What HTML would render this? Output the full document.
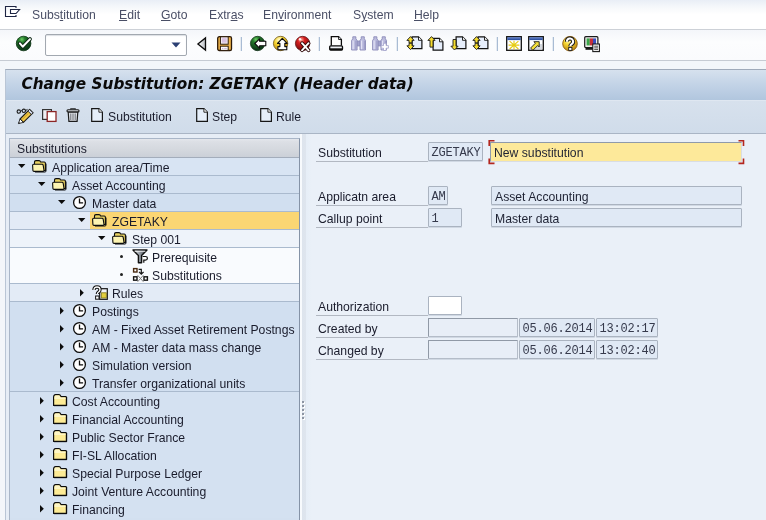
<!DOCTYPE html>
<html><head><meta charset="utf-8"><title>Change Substitution</title>
<style>
*{box-sizing:border-box;margin:0;padding:0}
html,body{width:766px;height:520px;overflow:hidden}
body{position:relative;will-change:transform;background:#eef2f8;font-family:"Liberation Sans","DejaVu Sans",sans-serif;font-size:12.2px;color:#1a1c2c}
.a{position:absolute}
.t{position:absolute;white-space:nowrap;line-height:14px;height:14px}
svg{position:absolute;overflow:visible}
#menubar{left:0;top:0;width:766px;height:29px;background:linear-gradient(#e9eef6,#f6f8fb 25%,#ffffff 50%,#ffffff)}
#menuline{left:0;top:29px;width:766px;height:1px;background:#cdd1d7}
#toolbar{left:0;top:30px;width:766px;height:30px;background:linear-gradient(#f4f6fa,#fcfdfe 40%,#fafbfd)}
#toolline{left:0;top:60px;width:766px;height:1px;background:#c6cbd3}
#gap{left:0;top:61px;width:766px;height:459px;background:#f3f6fa}
.menu{top:8px;color:#4a4f66}
#titlepanel{left:5px;top:69px;width:761px;height:451px;background:#e4ebf4;border-left:1px solid #b9c5d5;border-top:1px solid #9faaba}
#titlebar{left:6px;top:70px;width:760px;height:30px;background:linear-gradient(#d6e1ee,#c4d4e7 45%,#b1c6de)}
#titleline{left:6px;top:100px;width:760px;height:1px;background:#dfe7f1}
#title{left:21.500px;top:73px;font-family:"DejaVu Sans","Liberation Sans",sans-serif;font-size:15.300px;line-height:22px;height:22px;font-weight:bold;font-style:italic;color:#0a0a0a}
#apptb{left:6px;top:101px;width:760px;height:32px;background:linear-gradient(#d7e1ed,#d0dcea)}
#apptbline{left:6px;top:133px;width:760px;height:1px;background:#a9b5c5}
#work{left:6px;top:134px;width:760px;height:386px;background:#e6edf6}
#right{left:306px;top:134px;width:460px;height:386px;background:linear-gradient(90deg,#e6eef7,#eaf0f8 6px,#eaf0f8)}
#split{left:300px;top:134px;width:6px;height:386px;background:linear-gradient(90deg,#f7fafd 0,#f7fafd 2px,#dde4ed 2px,#dee5ee 6px)}
#tree{left:9px;top:138px;width:291px;height:382px;border:1px solid #a9b6c8;border-right-color:#8593a7;border-bottom:0;background:#d3e0f0}
#treehdr{left:10px;top:139px;width:289px;height:19px;background:linear-gradient(#e4e7ec,#dcdfe5 15%,#d4d8de 60%,#cbd0d8);border-bottom:1px solid #a3adbb}
.row{position:absolute;left:10px;width:289px;height:18px}
.sep{position:absolute;left:10px;width:289px;height:1px;background:#aabace}
.lbl{color:#1a1c2c}
.ul{position:absolute;height:1px;background:#b2b8c2;left:316px;width:112px}
.fld{position:absolute;height:19px;border:1px solid #aab3c0;border-radius:1px;background:#e0e9f5;box-shadow:0 1px 0 rgba(160,172,188,0.350)}
.ft{position:absolute;white-space:nowrap;line-height:14px;height:14px;color:#1e2233}
.mono{font-family:"Liberation Mono","DejaVu Sans Mono",monospace;font-size:12px;letter-spacing:-0.200px;color:#363a4c}
</style></head><body>
<svg width="0" height="0" style="left:0;top:0"><defs>
<radialGradient id="gG" cx="40%" cy="25%" r="75%"><stop offset="0" stop-color="#7fd873"/><stop offset="0.3" stop-color="#2a8a30"/><stop offset="1" stop-color="#0c3d18"/></radialGradient>
<radialGradient id="gG2" cx="38%" cy="22%" r="70%"><stop offset="0" stop-color="#6fd066"/><stop offset="0.3" stop-color="#247a2b"/><stop offset="1" stop-color="#0c3a17"/></radialGradient>
<radialGradient id="gY" cx="40%" cy="25%" r="80%"><stop offset="0" stop-color="#fffbd0"/><stop offset="0.4" stop-color="#f7d530"/><stop offset="1" stop-color="#b07a10"/></radialGradient>
<radialGradient id="gR" cx="40%" cy="25%" r="80%"><stop offset="0" stop-color="#ffb0a0"/><stop offset="0.3" stop-color="#d62020"/><stop offset="1" stop-color="#6a0808"/></radialGradient>
<linearGradient id="gTri" x1="0" x2="1"><stop offset="0" stop-color="#fff"/><stop offset="1" stop-color="#b9bec4"/></linearGradient>
<linearGradient id="gFun" x1="0" x2="1"><stop offset="0" stop-color="#fafafa"/><stop offset="0.4" stop-color="#a4aab2"/><stop offset="1" stop-color="#3a3f46"/></linearGradient>
</defs></svg>
<div class="a" id="menubar"></div><div class="a" id="menuline"></div><div class="a" id="toolbar"></div><div class="a" id="toolline"></div><div class="a" id="gap"></div>
<span class="t menu" style="left:32px">Subs<u>t</u>itution</span>
<span class="t menu" style="left:119px"><u>E</u>dit</span>
<span class="t menu" style="left:161px"><u>G</u>oto</span>
<span class="t menu" style="left:209px">Extr<u>a</u>s</span>
<span class="t menu" style="left:263px">En<u>v</u>ironment</span>
<span class="t menu" style="left:353px">S<u>y</u>stem</span>
<span class="t menu" style="left:414px"><u>H</u>elp</span>
<div class="a" style="left:45px;top:34px;width:142px;height:22px;border:1px solid #a2a8b0;border-radius:2px;background:#fff;box-shadow:inset 0 1px 1px #dcdfe4"></div>
<svg style="left:171px;top:42px" width="10" height="6"><path d="M0.5 0.5h9l-4.5 5z" fill="#2b3f73"/></svg>
<svg style="left:4px;top:5px" width="18" height="13" viewBox="0 0 18 13"><path d="M12 3V1.500H1.500V11.500H12V10" fill="none" stroke="#1d2442" stroke-width="1.100"/><path d="M6.500 4.500H15.600L12 8.500H6.500Z" fill="#fff" stroke="#1d2442" stroke-width="1.100"/></svg>
<svg style="left:15px;top:35px" width="19" height="17" viewBox="0 0 19 17"><circle cx="8.600" cy="8.500" r="7.300" fill="url(#gG2)" stroke="#0b3313" stroke-width="0.800"/><path d="M4.900 8.400l2.800 3.300 7.300-7.600" fill="none" stroke="#0c2612" stroke-width="3.800" stroke-linecap="round" stroke-linejoin="round"/><path d="M4.900 8.400l2.800 3.300 7.300-7.600" fill="none" stroke="#fff" stroke-width="2" stroke-linecap="round" stroke-linejoin="round"/></svg>
<svg style="left:196px;top:36px" width="12" height="16" viewBox="0 0 12 16"><path d="M9.500 1.900V14.100L1.900 8Z" fill="url(#gTri)" stroke="#0c0c0c" stroke-width="1.300" stroke-linejoin="miter"/></svg>
<svg style="left:217px;top:36px" width="16" height="16" viewBox="0 0 16 16"><rect x="0.700" y="0.700" width="13.800" height="13.800" rx="1.600" fill="#f1b64c" stroke="#2c1a08" stroke-width="1.300"/><rect x="3.400" y="0.800" width="7.800" height="7.400" fill="#f6f0f8" stroke="#2c1a08" stroke-width="1"/><rect x="4.900" y="2.100" width="4.800" height="4.600" fill="#d9c2e2"/><rect x="3.400" y="10.200" width="7.800" height="4.200" fill="#fff" stroke="#2c1a08" stroke-width="1"/><path d="M5 12.400h1.400M7.200 12.400h2.600" stroke="#c9b0d8" stroke-width="1"/></svg>
<svg style="left:250px;top:36px" width="18" height="17" viewBox="0 0 18 17"><circle cx="7.600" cy="7.500" r="7.200" fill="url(#gG2)" stroke="#0a2a10" stroke-width="0.700"/><path d="M4.800 7.500L9.600 2.800V5.300H15.800V9.700H9.600V12.200Z" fill="#fff" stroke="#0a0a0a" stroke-width="1.100" stroke-linejoin="round"/></svg>
<svg style="left:273px;top:36px" width="18" height="17" viewBox="0 0 18 17"><circle cx="7.600" cy="7.500" r="7.200" fill="url(#gY)" stroke="#5a4208" stroke-width="0.700"/><path d="M9.300 2.300L14.200 7.400H11.800V10.600H13.800V13.800H4.900V10.600H6.900V7.400H4.500Z" fill="#fff" stroke="#0a0a0a" stroke-width="1.100" stroke-linejoin="round"/></svg>
<svg style="left:295px;top:36px" width="18" height="17" viewBox="0 0 18 17"><circle cx="7.600" cy="7.500" r="7.200" fill="url(#gR)" stroke="#4a0808" stroke-width="0.700"/><path d="M7 7.200L13.600 14.300M13.600 7.200L7 14.300" stroke="#2a0606" stroke-width="3.600" stroke-linecap="round"/><path d="M7 7.200L13.600 14.300M13.600 7.200L7 14.300" stroke="#fff" stroke-width="1.900" stroke-linecap="round"/><circle cx="5" cy="3.300" r="1.200" fill="#fff" opacity="0.900"/></svg>
<svg style="left:329px;top:36px" width="15" height="15" viewBox="0 0 15 15"><path d="M2.300 9.700V0.700H9.600L12.400 3.500V9.700" fill="#fff" stroke="#0c0c0c" stroke-width="1.300"/><path d="M9.600 0.700V3.500H12.400" fill="#e4e8ee" stroke="#0c0c0c" stroke-width="0.900"/><rect x="0.700" y="9.800" width="12.800" height="4.300" rx="1" fill="#eef1f6" stroke="#0c0c0c" stroke-width="1.300"/><path d="M0.700 13.200H13.500" stroke="#0c0c0c" stroke-width="1.800"/></svg>
<svg style="left:406px;top:36px" width="17" height="15" viewBox="0 0 17 15"><path d="M6.1 0.8999999999999999H12.5L15.9 4.3V12.700000000000001H6.1Z" fill="#e6eefb" stroke="#111" stroke-width="1.200"/><path d="M12.5 0.8999999999999999V4.3H15.9" fill="#fff" stroke="#111" stroke-width="0.900"/><path d="M4.5 0.6L8.1 4.3999999999999995H6.0V6.8999999999999995H3.0V4.3999999999999995H0.8999999999999999Z" fill="#f5dc2e" stroke="#1a1a1a" stroke-width="0.900" stroke-linejoin="round"/><path d="M4.5 13.6L8.1 9.8H6.0V7.3H3.0V9.8H0.8999999999999999Z" fill="#f5dc2e" stroke="#1a1a1a" stroke-width="0.900" stroke-linejoin="round"/></svg>
<svg style="left:427px;top:36px" width="17" height="15" viewBox="0 0 17 15"><path d="M6.1 2.4H12.5L15.9 5.8V14.200000000000001H6.1Z" fill="#e6eefb" stroke="#111" stroke-width="1.200"/><path d="M12.5 2.4V5.8H15.9" fill="#fff" stroke="#111" stroke-width="0.900"/><path d="M4.5 0.6L8.1 4.3999999999999995H6.0V11.1H3.0V4.3999999999999995H0.8999999999999999Z" fill="#f5dc2e" stroke="#1a1a1a" stroke-width="0.900" stroke-linejoin="round"/></svg>
<svg style="left:450px;top:36px" width="17" height="15" viewBox="0 0 17 15"><path d="M6.1 0.8999999999999999H12.5L15.9 4.3V12.700000000000001H6.1Z" fill="#e6eefb" stroke="#111" stroke-width="1.200"/><path d="M12.5 0.8999999999999999V4.3H15.9" fill="#fff" stroke="#111" stroke-width="0.900"/><path d="M4.5 14L8.1 10.2H6.0V3.5H3.0V10.2H0.8999999999999999Z" fill="#f5dc2e" stroke="#1a1a1a" stroke-width="0.900" stroke-linejoin="round"/></svg>
<svg style="left:472px;top:36px" width="17" height="15" viewBox="0 0 17 15"><path d="M6.1 0.8999999999999999H12.5L15.9 4.3V12.700000000000001H6.1Z" fill="#e6eefb" stroke="#111" stroke-width="1.200"/><path d="M12.5 0.8999999999999999V4.3H15.9" fill="#fff" stroke="#111" stroke-width="0.900"/><path d="M4.5 0.6L8.1 4.3999999999999995H6.0V6.8999999999999995H3.0V4.3999999999999995H0.8999999999999999Z" fill="#f5dc2e" stroke="#1a1a1a" stroke-width="0.900" stroke-linejoin="round"/><path d="M4.5 13.6L8.1 9.8H6.0V7.3H3.0V9.8H0.8999999999999999Z" fill="#f5dc2e" stroke="#1a1a1a" stroke-width="0.900" stroke-linejoin="round"/></svg>
<svg style="left:506px;top:36px" width="16" height="15" viewBox="0 0 16 15"><rect x="0.700" y="0.700" width="14.600" height="13.600" fill="#fff" stroke="#111" stroke-width="1.300"/><rect x="1.300" y="1.300" width="13.400" height="2.800" fill="#2f52a4"/><path d="M2 2h12" stroke="#7f9ad6" stroke-width="0.700"/><path d="M8 4.800v8.600M2.600 9.100h10.800M3.600 5.200l8.800 7.800M12.400 5.200l-8.800 7.800" stroke="#e6cc12" stroke-width="1.100"/></svg>
<svg style="left:528px;top:36px" width="16" height="15" viewBox="0 0 16 15"><rect x="0.700" y="0.700" width="14.600" height="13.600" fill="#fff" stroke="#111" stroke-width="1.300"/><rect x="1.300" y="1.300" width="13.400" height="2.800" fill="#2f52a4"/><path d="M2 2h12" stroke="#7f9ad6" stroke-width="0.700"/><rect x="7.500" y="8" width="6.500" height="5.500" fill="#d4d8de"/><path d="M2.600 12L7.400 7.200L5.900 5.700H11.200V11L9.700 9.500L4.900 14.300Z" fill="#f3df3a" stroke="#1a1a1a" stroke-width="0.900" stroke-linejoin="round"/></svg>
<svg style="left:562px;top:36px" width="17" height="16" viewBox="0 0 17 16"><circle cx="8" cy="7.700" r="7.300" fill="url(#gY)" stroke="#8a5a0c" stroke-width="0.900"/><path d="M4.900 5.700a3.100 3.100 0 1 1 4.700 2.500q-1.300 0.800-1.300 2.100" fill="none" stroke="#1a1a1a" stroke-width="4"/><path d="M4.900 5.700a3.100 3.100 0 1 1 4.700 2.500q-1.300 0.800-1.300 2.100" fill="none" stroke="#fff" stroke-width="2"/><rect x="6.700" y="11.400" width="3.200" height="3" fill="#fff" stroke="#1a1a1a" stroke-width="0.900"/></svg>
<svg style="left:584px;top:36px" width="17" height="17" viewBox="0 0 17 17"><rect x="0.700" y="0.700" width="13.200" height="10.800" rx="1" fill="#eeeeee" stroke="#1a1a1a" stroke-width="1.200"/><rect x="2.600" y="2.400" width="3.200" height="7" fill="#3aa64a"/><rect x="5.800" y="2.400" width="3.200" height="7" fill="#c62f3a"/><rect x="9" y="2.400" width="3" height="7" fill="#3a4cc0"/><rect x="1.500" y="12" width="8" height="1.800" fill="#1a1a1a"/><rect x="8.800" y="8" width="6.600" height="7.600" fill="#fff" stroke="#1a1a1a" stroke-width="1.100"/><path d="M10.200 10.200h3.800M10.200 11.900h3.800M10.200 13.600h3.800" stroke="#1a1a1a" stroke-width="0.800"/></svg>
<svg style="left:351px;top:36px" width="17" height="15" viewBox="0 0 17 15"><rect x="5.800" y="5" width="3.600" height="5" fill="#a2a2cc" stroke="#8a8ab8" stroke-width="0.700"/><path d="M1.7999999999999998 0.800H4.8999999999999995V2.800L6.1 4.400V14H0.6V4.400L1.7999999999999998 2.800Z" fill="#bcbcde" stroke="#8a8ab8" stroke-width="0.900" stroke-linejoin="round"/><path d="M2.1 4.600V13.200" stroke="#e2e2f5" stroke-width="1.200"/><path d="M4.8999999999999995 4.600V13.200" stroke="#9a9ac6" stroke-width="1.100"/><path d="M10.2 0.800H13.3V2.800L14.5 4.400V14H9V4.400L10.2 2.800Z" fill="#bcbcde" stroke="#8a8ab8" stroke-width="0.900" stroke-linejoin="round"/><path d="M10.5 4.600V13.200" stroke="#e2e2f5" stroke-width="1.200"/><path d="M13.3 4.600V13.200" stroke="#9a9ac6" stroke-width="1.100"/></svg>
<svg style="left:372px;top:36px" width="17" height="15" viewBox="0 0 17 15"><rect x="5.800" y="5" width="3.600" height="5" fill="#a2a2cc" stroke="#8a8ab8" stroke-width="0.700"/><path d="M1.7999999999999998 0.800H4.8999999999999995V2.800L6.1 4.400V14H0.6V4.400L1.7999999999999998 2.800Z" fill="#bcbcde" stroke="#8a8ab8" stroke-width="0.900" stroke-linejoin="round"/><path d="M2.1 4.600V13.200" stroke="#e2e2f5" stroke-width="1.200"/><path d="M4.8999999999999995 4.600V13.200" stroke="#9a9ac6" stroke-width="1.100"/><path d="M10.2 0.800H13.3V2.800L14.5 4.400V14H9V4.400L10.2 2.800Z" fill="#bcbcde" stroke="#8a8ab8" stroke-width="0.900" stroke-linejoin="round"/><path d="M10.5 4.600V13.200" stroke="#e2e2f5" stroke-width="1.200"/><path d="M13.3 4.600V13.200" stroke="#9a9ac6" stroke-width="1.100"/><path d="M9.200 9.600h2.300V7.300h2.600v2.300h2.300v2.600h-2.300v2.300h-2.600v-2.300H9.200Z" fill="#fff" stroke="#a2a2cc" stroke-width="0.800"/></svg>
<div class="a" style="left:241px;top:37px;width:1px;height:14px;background:#a9bcd4;box-shadow:-1px 0 0 rgba(169,188,212,0.25)"></div>
<div class="a" style="left:319px;top:37px;width:1px;height:14px;background:#a9bcd4;box-shadow:-1px 0 0 rgba(169,188,212,0.25)"></div>
<div class="a" style="left:397px;top:37px;width:1px;height:14px;background:#a9bcd4;box-shadow:-1px 0 0 rgba(169,188,212,0.25)"></div>
<div class="a" style="left:497px;top:37px;width:1px;height:14px;background:#a9bcd4;box-shadow:-1px 0 0 rgba(169,188,212,0.25)"></div>
<div class="a" style="left:553px;top:37px;width:1px;height:14px;background:#a9bcd4;box-shadow:-1px 0 0 rgba(169,188,212,0.25)"></div>
<div class="a" id="titlepanel"></div><div class="a" id="titlebar"></div><div class="a" id="titleline"></div>
<div class="t" id="title">Change Substitution: ZGETAKY (Header data)</div>
<div class="a" id="apptb"></div><div class="a" id="apptbline"></div>
<span class="t" style="left:108px;top:110px;color:#1a1c2c">Substitution</span>
<span class="t" style="left:212px;top:110px;color:#1a1c2c">Step</span>
<span class="t" style="left:276px;top:110px;color:#1a1c2c">Rule</span>
<svg style="left:91px;top:108px" width="14" height="14" viewBox="0 0 14 14"><path d="M0.700 0.700H7.900L11.400 4.200V13.300H0.700Z" fill="#e6effa" stroke="#161616" stroke-width="1.200"/><path d="M7.900 0.700V4.200H11.400" fill="#fff" stroke="#161616" stroke-width="0.900"/></svg>
<svg style="left:196px;top:108px" width="14" height="14" viewBox="0 0 14 14"><path d="M0.700 0.700H7.900L11.400 4.200V13.300H0.700Z" fill="#e6effa" stroke="#161616" stroke-width="1.200"/><path d="M7.900 0.700V4.200H11.400" fill="#fff" stroke="#161616" stroke-width="0.900"/></svg>
<svg style="left:260px;top:108px" width="14" height="14" viewBox="0 0 14 14"><path d="M0.700 0.700H7.900L11.400 4.200V13.300H0.700Z" fill="#e6effa" stroke="#161616" stroke-width="1.200"/><path d="M7.900 0.700V4.200H11.400" fill="#fff" stroke="#161616" stroke-width="0.900"/></svg>
<svg style="left:16px;top:108px" width="19" height="16" viewBox="0 0 19 16"><circle cx="2.800" cy="3.600" r="1.700" fill="none" stroke="#1c1c1c" stroke-width="1.100"/><circle cx="7.800" cy="2.800" r="1.700" fill="none" stroke="#1c1c1c" stroke-width="1.100"/><path d="M4.500 3.300q0.900-1.200 1.700-0.300M9.500 2.600l2-1.200" fill="none" stroke="#1c1c1c" stroke-width="1"/><path d="M13.600 1.400L17 4.800L7.400 14.400L4 11Z" fill="#f3c844" stroke="#1c1c1c" stroke-width="1.100" stroke-linejoin="round"/><path d="M13.600 1.400L17 4.800L15.300 6.500L11.900 3.100Z" fill="#d5dbee" stroke="#1c1c1c" stroke-width="0.900"/><path d="M4 11L7.400 14.400L2.400 15.600Z" fill="#fff" stroke="#1c1c1c" stroke-width="0.900" stroke-linejoin="round"/><path d="M2.400 15.600l1.700-0.400-1.200-1.200z" fill="#1c1c1c"/><path d="M12.200 5.500L6.200 11.500" stroke="#b8901c" stroke-width="0.800"/></svg>
<svg style="left:42px;top:109px" width="15" height="13" viewBox="0 0 15 13"><rect x="0.600" y="0.600" width="8.800" height="9.800" fill="#eef0f4" stroke="#333" stroke-width="1.200"/><rect x="5.200" y="2.600" width="8.800" height="9.800" fill="#fff" stroke="#8c2525" stroke-width="1.300"/></svg>
<svg style="left:66px;top:108px" width="14" height="14" viewBox="0 0 14 14"><path d="M4.800 1.800V0.700h4.400v1.100" fill="none" stroke="#222" stroke-width="1.100"/><rect x="1" y="1.800" width="12" height="2.200" rx="1" fill="#d4d8de" stroke="#1c1c1c" stroke-width="1.100"/><path d="M2.200 4.200h9.600l-0.700 9.200H2.900Z" fill="#e0e3e8" stroke="#1c1c1c" stroke-width="1.200"/><path d="M4.800 5.500v6.500M7 5.500v6.500M9.200 5.500v6.500" stroke="#5c6068" stroke-width="0.900"/></svg>
<div class="a" id="work"></div><div class="a" id="split"></div><div class="a" id="right"></div>
<div class="a" style="left:302px;top:401px;width:2px;height:2px;background:#8d95a3;box-shadow:1px 1px 0 #fff"></div><div class="a" style="left:302px;top:405px;width:2px;height:2px;background:#8d95a3;box-shadow:1px 1px 0 #fff"></div><div class="a" style="left:302px;top:409px;width:2px;height:2px;background:#8d95a3;box-shadow:1px 1px 0 #fff"></div><div class="a" style="left:302px;top:413px;width:2px;height:2px;background:#8d95a3;box-shadow:1px 1px 0 #fff"></div><div class="a" style="left:302px;top:417px;width:2px;height:2px;background:#8d95a3;box-shadow:1px 1px 0 #fff"></div>
<div class="a" id="tree"></div><div class="a" id="treehdr"></div>
<span class="t" style="left:17px;top:142px">Substitutions</span>
<div class="row" style="top:158px;background:#d8e4f3"></div>
<svg style="left:17.5px;top:164.2px" width="8" height="5"><path d="M0 0h7.400l-3.700 4z" fill="#0c0c0c"/></svg>
<svg style="left:32px;top:160px" width="17" height="16" viewBox="0 0 17 16"><path d="M2.500 2.200Q2.500 0.600 4 0.600H7Q8.300 0.600 8.600 2H12.300Q13.400 2 13.400 3.200V10.500H2.500Z" fill="#e9d262" stroke="#0c0c0c" stroke-width="1.100"/><path d="M0.600 5.300Q0.600 4.300 1.600 4.300H10Q11 4.300 11.200 5.300L12 10.300Q12 11.400 11 11.400H2Q1 11.400 0.900 10.400Z" fill="#fdf4b2" stroke="#0c0c0c" stroke-width="1.100"/><path d="M14 3.600V11Q14 12 13 12H3" fill="none" stroke="#0c0c0c" stroke-width="1"/></svg>
<span class="t" style="left:52px;top:161px">Application area/Time</span>
<div class="row" style="top:176px;background:#d4e1f1"></div>
<div class="sep" style="top:175px"></div>
<svg style="left:37.5px;top:182.2px" width="8" height="5"><path d="M0 0h7.400l-3.700 4z" fill="#0c0c0c"/></svg>
<svg style="left:52px;top:178px" width="17" height="16" viewBox="0 0 17 16"><path d="M2.500 2.200Q2.500 0.600 4 0.600H7Q8.300 0.600 8.600 2H12.300Q13.400 2 13.400 3.200V10.500H2.500Z" fill="#e9d262" stroke="#0c0c0c" stroke-width="1.100"/><path d="M0.600 5.300Q0.600 4.300 1.600 4.300H10Q11 4.300 11.200 5.300L12 10.300Q12 11.400 11 11.400H2Q1 11.400 0.900 10.400Z" fill="#fdf4b2" stroke="#0c0c0c" stroke-width="1.100"/><path d="M14 3.600V11Q14 12 13 12H3" fill="none" stroke="#0c0c0c" stroke-width="1"/></svg>
<span class="t" style="left:72px;top:179px">Asset Accounting</span>
<div class="row" style="top:194px;background:#d1dff0"></div>
<div class="sep" style="top:193px"></div>
<svg style="left:57.5px;top:200.2px" width="8" height="5"><path d="M0 0h7.400l-3.700 4z" fill="#0c0c0c"/></svg>
<svg style="left:72.8px;top:195.9px" width="17" height="16" viewBox="0 0 17 16"><circle cx="6.500" cy="6.500" r="5.900" fill="#fff" stroke="#0c0c0c" stroke-width="1.300"/><path d="M6.500 2.600v4.300h3.600" fill="none" stroke="#0c0c0c" stroke-width="1.300"/></svg>
<span class="t" style="left:92px;top:197px">Master data</span>
<div class="row" style="top:212px;background:#e3ebf6"></div>
<div class="sep" style="top:211px"></div>
<div class="a" style="left:90px;top:212px;width:209px;height:17px;background:#fbd673"></div>
<svg style="left:77.5px;top:218.2px" width="8" height="5"><path d="M0 0h7.400l-3.700 4z" fill="#0c0c0c"/></svg>
<svg style="left:92px;top:214px" width="17" height="16" viewBox="0 0 17 16"><path d="M2.500 2.200Q2.500 0.600 4 0.600H7Q8.300 0.600 8.600 2H12.300Q13.400 2 13.400 3.200V10.500H2.500Z" fill="#e9d262" stroke="#0c0c0c" stroke-width="1.100"/><path d="M0.600 5.300Q0.600 4.300 1.600 4.300H10Q11 4.300 11.200 5.300L12 10.300Q12 11.400 11 11.400H2Q1 11.400 0.900 10.400Z" fill="#fdf4b2" stroke="#0c0c0c" stroke-width="1.100"/><path d="M14 3.600V11Q14 12 13 12H3" fill="none" stroke="#0c0c0c" stroke-width="1"/></svg>
<span class="t" style="left:112px;top:215px">ZGETAKY</span>
<div class="row" style="top:230px;background:#eef3fa"></div>
<div class="sep" style="top:229px"></div>
<svg style="left:97.5px;top:236.2px" width="8" height="5"><path d="M0 0h7.400l-3.700 4z" fill="#0c0c0c"/></svg>
<svg style="left:112px;top:232px" width="17" height="16" viewBox="0 0 17 16"><path d="M2.500 2.200Q2.500 0.600 4 0.600H7Q8.300 0.600 8.600 2H12.300Q13.400 2 13.400 3.200V10.500H2.500Z" fill="#e9d262" stroke="#0c0c0c" stroke-width="1.100"/><path d="M0.600 5.300Q0.600 4.300 1.600 4.300H10Q11 4.300 11.200 5.300L12 10.300Q12 11.400 11 11.400H2Q1 11.400 0.900 10.400Z" fill="#fdf4b2" stroke="#0c0c0c" stroke-width="1.100"/><path d="M14 3.600V11Q14 12 13 12H3" fill="none" stroke="#0c0c0c" stroke-width="1"/></svg>
<span class="t" style="left:132px;top:233px">Step 001</span>
<div class="row" style="top:248px;background:#f9fbfe"></div>
<div class="sep" style="top:247px"></div>
<div class="a" style="left:120px;top:255px;width:3px;height:3px;border-radius:1.500px;background:#222"></div>
<svg style="left:132px;top:249px" width="17" height="16" viewBox="0 0 17 16"><path d="M1 0.900h14l-5.400 5.700v7.200h-3.200v-7.200Z" fill="url(#gFun)" stroke="#101010" stroke-width="1.400" stroke-linejoin="round"/><path d="M2.600 2.300h10.800" stroke="#f4f4f4" stroke-width="0.900"/><path d="M10.600 7.500h2.900q1.900 0 1.900 1.800t-1.900 1.800h-1.700v2.700" fill="#fff" stroke="#101010" stroke-width="1.200"/></svg>
<span class="t" style="left:152px;top:251px">Prerequisite</span>
<div class="row" style="top:266px;background:#f9fbfe"></div>
<div class="a" style="left:120px;top:273px;width:3px;height:3px;border-radius:1.500px;background:#222"></div>
<svg style="left:132px;top:267px" width="17" height="16" viewBox="0 0 17 16"><rect x="1.600" y="1.600" width="3.400" height="3.400" fill="#fff" stroke="#4a2a10" stroke-width="1.400"/><rect x="1.600" y="9.800" width="3.400" height="3.400" fill="#fff" stroke="#161616" stroke-width="1.400"/><rect x="12" y="9.800" width="3.400" height="3.400" fill="#fff" stroke="#161616" stroke-width="1.400"/><path d="M6.600 2.400h2.700v4.300M7 4.800l2.300 2.400 2.300-2.400" fill="none" stroke="#161616" stroke-width="1.200"/><path d="M5.600 8.200l5.800 6.600M11.400 8.200l-5.800 6.600" stroke="#7c7c7c" stroke-width="1"/></svg>
<span class="t" style="left:152px;top:269px">Substitutions</span>
<div class="row" style="top:284px;background:#e3ebf6"></div>
<div class="sep" style="top:283px"></div>
<svg style="left:80px;top:289px" width="5" height="8"><path d="M0 0v7.400l3.800-3.700z" fill="#0c0c0c"/></svg>
<svg style="left:92px;top:285px" width="17" height="16" viewBox="0 0 17 16"><rect x="7.700" y="3.700" width="7.600" height="10.600" fill="#f2f4f8" stroke="#141414" stroke-width="1.200"/><rect x="9.300" y="7.800" width="5" height="5.200" fill="#e3cf3f" stroke="#7e7418" stroke-width="0.800"/><path d="M2 5q0-3 3-3t3 2.700q0 1.500-1.600 2.500-1 0.700-1 1.800" fill="none" stroke="#141414" stroke-width="3.400"/><path d="M2 5q0-3 3-3t3 2.700q0 1.500-1.600 2.500-1 0.700-1 1.800" fill="none" stroke="#fff" stroke-width="1.300"/><rect x="3.600" y="11" width="3.400" height="3.200" fill="#fff" stroke="#141414" stroke-width="1"/></svg>
<span class="t" style="left:112px;top:287px">Rules</span>
<div class="row" style="top:302px;background:#d1dff0"></div>
<div class="sep" style="top:301px"></div>
<svg style="left:60px;top:307px" width="5" height="8"><path d="M0 0v7.400l3.800-3.700z" fill="#0c0c0c"/></svg>
<svg style="left:72.8px;top:303.9px" width="17" height="16" viewBox="0 0 17 16"><circle cx="6.500" cy="6.500" r="5.900" fill="#fff" stroke="#0c0c0c" stroke-width="1.300"/><path d="M6.500 2.600v4.300h3.600" fill="none" stroke="#0c0c0c" stroke-width="1.300"/></svg>
<span class="t" style="left:92px;top:305px">Postings</span>
<div class="row" style="top:320px;background:#d1dff0"></div>
<svg style="left:60px;top:325px" width="5" height="8"><path d="M0 0v7.400l3.800-3.700z" fill="#0c0c0c"/></svg>
<svg style="left:72.8px;top:321.9px" width="17" height="16" viewBox="0 0 17 16"><circle cx="6.500" cy="6.500" r="5.900" fill="#fff" stroke="#0c0c0c" stroke-width="1.300"/><path d="M6.500 2.600v4.300h3.600" fill="none" stroke="#0c0c0c" stroke-width="1.300"/></svg>
<span class="t" style="left:92px;top:323px">AM - Fixed Asset Retirement Postngs</span>
<div class="row" style="top:338px;background:#d1dff0"></div>
<svg style="left:60px;top:343px" width="5" height="8"><path d="M0 0v7.400l3.800-3.700z" fill="#0c0c0c"/></svg>
<svg style="left:72.8px;top:339.9px" width="17" height="16" viewBox="0 0 17 16"><circle cx="6.500" cy="6.500" r="5.900" fill="#fff" stroke="#0c0c0c" stroke-width="1.300"/><path d="M6.500 2.600v4.300h3.600" fill="none" stroke="#0c0c0c" stroke-width="1.300"/></svg>
<span class="t" style="left:92px;top:341px">AM - Master data mass change</span>
<div class="row" style="top:356px;background:#d1dff0"></div>
<svg style="left:60px;top:361px" width="5" height="8"><path d="M0 0v7.400l3.800-3.700z" fill="#0c0c0c"/></svg>
<svg style="left:72.8px;top:357.9px" width="17" height="16" viewBox="0 0 17 16"><circle cx="6.500" cy="6.500" r="5.900" fill="#fff" stroke="#0c0c0c" stroke-width="1.300"/><path d="M6.500 2.600v4.300h3.600" fill="none" stroke="#0c0c0c" stroke-width="1.300"/></svg>
<span class="t" style="left:92px;top:359px">Simulation version</span>
<div class="row" style="top:374px;background:#d1dff0"></div>
<svg style="left:60px;top:379px" width="5" height="8"><path d="M0 0v7.400l3.800-3.700z" fill="#0c0c0c"/></svg>
<svg style="left:72.8px;top:375.9px" width="17" height="16" viewBox="0 0 17 16"><circle cx="6.500" cy="6.500" r="5.900" fill="#fff" stroke="#0c0c0c" stroke-width="1.300"/><path d="M6.500 2.600v4.300h3.600" fill="none" stroke="#0c0c0c" stroke-width="1.300"/></svg>
<span class="t" style="left:92px;top:377px">Transfer organizational units</span>
<div class="row" style="top:392px;background:#d4e1f1"></div>
<div class="sep" style="top:391px"></div>
<svg style="left:40px;top:397px" width="5" height="8"><path d="M0 0v7.400l3.800-3.700z" fill="#0c0c0c"/></svg>
<svg style="left:52.5px;top:394px" width="17" height="16" viewBox="0 0 17 16"><path d="M0.600 3.200Q0.600 0.600 2.600 0.600H6Q7.200 0.600 7.600 1.800L8 2.600H12.600Q13.400 2.600 13.400 3.400V11.400H0.600Z" fill="#fdeb95" stroke="#0c0c0c" stroke-width="1.200" stroke-linejoin="round"/><path d="M1.500 3.400Q1.500 1.500 2.800 1.500H5.800Q6.600 1.500 7 2.600L7.400 3.500H12.500V5H1.500Z" fill="#fef6c6"/><path d="M13.700 3V11.700H1" fill="none" stroke="#0c0c0c" stroke-width="0.900"/></svg>
<span class="t" style="left:72px;top:395px">Cost Accounting</span>
<div class="row" style="top:410px;background:#d4e1f1"></div>
<svg style="left:40px;top:415px" width="5" height="8"><path d="M0 0v7.400l3.800-3.700z" fill="#0c0c0c"/></svg>
<svg style="left:52.5px;top:412px" width="17" height="16" viewBox="0 0 17 16"><path d="M0.600 3.200Q0.600 0.600 2.600 0.600H6Q7.200 0.600 7.600 1.800L8 2.600H12.600Q13.400 2.600 13.400 3.400V11.400H0.600Z" fill="#fdeb95" stroke="#0c0c0c" stroke-width="1.200" stroke-linejoin="round"/><path d="M1.500 3.400Q1.500 1.500 2.800 1.500H5.800Q6.600 1.500 7 2.600L7.400 3.500H12.500V5H1.500Z" fill="#fef6c6"/><path d="M13.700 3V11.700H1" fill="none" stroke="#0c0c0c" stroke-width="0.900"/></svg>
<span class="t" style="left:72px;top:413px">Financial Accounting</span>
<div class="row" style="top:428px;background:#d4e1f1"></div>
<svg style="left:40px;top:433px" width="5" height="8"><path d="M0 0v7.400l3.800-3.700z" fill="#0c0c0c"/></svg>
<svg style="left:52.5px;top:430px" width="17" height="16" viewBox="0 0 17 16"><path d="M0.600 3.200Q0.600 0.600 2.600 0.600H6Q7.200 0.600 7.600 1.800L8 2.600H12.600Q13.400 2.600 13.400 3.400V11.400H0.600Z" fill="#fdeb95" stroke="#0c0c0c" stroke-width="1.200" stroke-linejoin="round"/><path d="M1.500 3.400Q1.500 1.500 2.800 1.500H5.800Q6.600 1.500 7 2.600L7.400 3.500H12.500V5H1.500Z" fill="#fef6c6"/><path d="M13.700 3V11.700H1" fill="none" stroke="#0c0c0c" stroke-width="0.900"/></svg>
<span class="t" style="left:72px;top:431px">Public Sector France</span>
<div class="row" style="top:446px;background:#d4e1f1"></div>
<svg style="left:40px;top:451px" width="5" height="8"><path d="M0 0v7.400l3.800-3.700z" fill="#0c0c0c"/></svg>
<svg style="left:52.5px;top:448px" width="17" height="16" viewBox="0 0 17 16"><path d="M0.600 3.200Q0.600 0.600 2.600 0.600H6Q7.200 0.600 7.600 1.800L8 2.600H12.600Q13.400 2.600 13.400 3.400V11.400H0.600Z" fill="#fdeb95" stroke="#0c0c0c" stroke-width="1.200" stroke-linejoin="round"/><path d="M1.500 3.400Q1.500 1.500 2.800 1.500H5.800Q6.600 1.500 7 2.600L7.400 3.500H12.500V5H1.500Z" fill="#fef6c6"/><path d="M13.700 3V11.700H1" fill="none" stroke="#0c0c0c" stroke-width="0.900"/></svg>
<span class="t" style="left:72px;top:449px">FI-SL Allocation</span>
<div class="row" style="top:464px;background:#d4e1f1"></div>
<svg style="left:40px;top:469px" width="5" height="8"><path d="M0 0v7.400l3.800-3.700z" fill="#0c0c0c"/></svg>
<svg style="left:52.5px;top:466px" width="17" height="16" viewBox="0 0 17 16"><path d="M0.600 3.200Q0.600 0.600 2.600 0.600H6Q7.200 0.600 7.600 1.800L8 2.600H12.600Q13.400 2.600 13.400 3.400V11.400H0.600Z" fill="#fdeb95" stroke="#0c0c0c" stroke-width="1.200" stroke-linejoin="round"/><path d="M1.500 3.400Q1.500 1.500 2.800 1.500H5.800Q6.600 1.500 7 2.600L7.400 3.500H12.500V5H1.500Z" fill="#fef6c6"/><path d="M13.700 3V11.700H1" fill="none" stroke="#0c0c0c" stroke-width="0.900"/></svg>
<span class="t" style="left:72px;top:467px">Special Purpose Ledger</span>
<div class="row" style="top:482px;background:#d4e1f1"></div>
<svg style="left:40px;top:487px" width="5" height="8"><path d="M0 0v7.400l3.800-3.700z" fill="#0c0c0c"/></svg>
<svg style="left:52.5px;top:484px" width="17" height="16" viewBox="0 0 17 16"><path d="M0.600 3.200Q0.600 0.600 2.600 0.600H6Q7.200 0.600 7.600 1.800L8 2.600H12.600Q13.400 2.600 13.400 3.400V11.400H0.600Z" fill="#fdeb95" stroke="#0c0c0c" stroke-width="1.200" stroke-linejoin="round"/><path d="M1.500 3.400Q1.500 1.500 2.800 1.500H5.800Q6.600 1.500 7 2.600L7.400 3.500H12.500V5H1.500Z" fill="#fef6c6"/><path d="M13.700 3V11.700H1" fill="none" stroke="#0c0c0c" stroke-width="0.900"/></svg>
<span class="t" style="left:72px;top:485px">Joint Venture Accounting</span>
<div class="row" style="top:500px;background:#d4e1f1"></div>
<svg style="left:40px;top:505px" width="5" height="8"><path d="M0 0v7.400l3.800-3.700z" fill="#0c0c0c"/></svg>
<svg style="left:52.5px;top:502px" width="17" height="16" viewBox="0 0 17 16"><path d="M0.600 3.200Q0.600 0.600 2.600 0.600H6Q7.200 0.600 7.600 1.800L8 2.600H12.600Q13.400 2.600 13.400 3.400V11.400H0.600Z" fill="#fdeb95" stroke="#0c0c0c" stroke-width="1.200" stroke-linejoin="round"/><path d="M1.500 3.400Q1.500 1.500 2.800 1.500H5.800Q6.600 1.500 7 2.600L7.400 3.500H12.500V5H1.500Z" fill="#fef6c6"/><path d="M13.700 3V11.700H1" fill="none" stroke="#0c0c0c" stroke-width="0.900"/></svg>
<span class="t" style="left:72px;top:503px">Financing</span>
<span class="t lbl" style="left:318px;top:146px">Substitution</span>
<div class="ul" style="top:161px"></div>
<div class="fld" style="left:428px;top:142px;width:55px"></div>
<span class="ft mono" style="left:431.5px;top:145.5px">ZGETAKY</span>
<div class="a" style="left:490px;top:142px;width:252px;height:20px;border:1px solid #9aa3ae;border-color:#8f9aaa #d9dde3 #d9dde3 #8f9aaa;background:#fde99a"></div>
<span class="ft" style="left:494px;top:146px">New substitution</span>
<svg style="left:488px;top:140px" width="256" height="25"><path d="M6.500 0.800H1.200V6M1.200 18.500V23.400H6.500M250.500 0.800H255.500V6M255.500 18.500V23.400H250.500" fill="none" stroke="#b3261e" stroke-width="1.600"/></svg>
<span class="t lbl" style="left:318px;top:190px">Applicatn area</span>
<div class="ul" style="top:205px"></div>
<div class="fld" style="left:428px;top:186px;width:20px"></div>
<span class="ft mono" style="left:431.5px;top:189.5px">AM</span>
<div class="fld" style="left:491px;top:186px;width:251px"></div>
<span class="ft" style="left:495px;top:190px">Asset Accounting</span>
<span class="t lbl" style="left:318px;top:212px">Callup point</span>
<div class="ul" style="top:227px"></div>
<div class="fld" style="left:428px;top:208px;width:34px"></div>
<span class="ft mono" style="left:431.5px;top:211.5px">1</span>
<div class="fld" style="left:491px;top:208px;width:251px"></div>
<span class="ft" style="left:495px;top:212px">Master data</span>
<span class="t lbl" style="left:318px;top:300px">Authorization</span>
<div class="ul" style="top:315px"></div>
<div class="fld" style="left:428px;top:296px;width:34px;background:#ffffff"></div>
<span class="t lbl" style="left:318px;top:322px">Created by</span>
<div class="ul" style="top:337px"></div>
<div class="fld" style="left:428px;top:318px;width:90px;background:#e8eef7;border-color:#9099a6 #b4bcc8 #b4bcc8 #9099a6"></div>
<div class="fld" style="left:519px;top:318px;width:76px"></div>
<span class="ft mono" style="left:522.5px;top:321.5px">05.06.2014</span>
<div class="fld" style="left:596px;top:318px;width:62px"></div>
<span class="ft mono" style="left:599.5px;top:321.5px">13:02:17</span>
<span class="t lbl" style="left:318px;top:344px">Changed by</span>
<div class="ul" style="top:359px"></div>
<div class="fld" style="left:428px;top:340px;width:90px;background:#e8eef7;border-color:#9099a6 #b4bcc8 #b4bcc8 #9099a6"></div>
<div class="fld" style="left:519px;top:340px;width:76px"></div>
<span class="ft mono" style="left:522.5px;top:343.5px">05.06.2014</span>
<div class="fld" style="left:596px;top:340px;width:62px"></div>
<span class="ft mono" style="left:599.5px;top:343.5px">13:02:40</span>
</body></html>
